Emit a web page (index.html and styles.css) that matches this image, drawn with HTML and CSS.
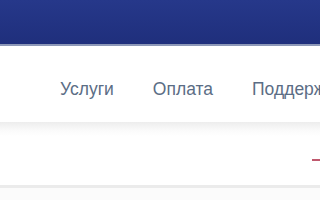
FILE: index.html
```html
<!DOCTYPE html>
<html lang="ru">
<head>
<meta charset="utf-8">
<link rel="stylesheet" href="styles.css">
</head>
<body>
<header class="topbar"></header>
<nav class="menu">
  <a class="menu-item" href="#">Услуги</a>
  <a class="menu-item" href="#">Оплата</a>
  <a class="menu-item" href="#">Поддержка</a>
</nav>
<section class="strip">
  <span class="mark"></span>
</section>
<div class="below"></div>
</body>
</html>
```
FILE: styles.css
```css
html, body { margin: 0; padding: 0; background: #fff; overflow: hidden; }
body { width: 320px; height: 200px; font-family: "Liberation Sans", Arial, sans-serif; }
.topbar {
  height: 44px;
  background: linear-gradient(#26388a, #1f2f7c);
  border-bottom: 2px solid #8d98b8;
}
.menu {
  display: flex;
  gap: 39px;
  padding: 10px 0 0 60px;
  height: 76px;
  box-sizing: border-box;
  align-items: center;
  white-space: nowrap;
}
.menu-item {
  color: #5b6d85;
  font-size: 17.5px;
  text-decoration: none;
}
.strip {
  height: 66px;
  background: linear-gradient(#ededed, #fbfbfb 9px, #fff 14px);
  border-bottom: 3px solid #ebebeb;
  display: flex;
  justify-content: flex-end;
  align-items: center;
  padding-top: 12px;
  box-sizing: border-box;
}
.mark {
  width: 8px;
  height: 2px;
  background: #b0304a;
  opacity: 0.8;
}
.below { height: 20px; background: #fbfbfb; }
```
